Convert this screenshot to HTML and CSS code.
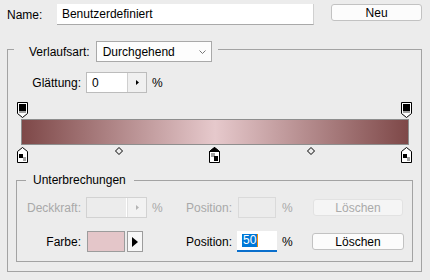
FILE: index.html
```html
<!DOCTYPE html>
<html lang="de">
<head>
  <meta charset="UTF-8">
  <title>Verlaufseditor</title>
  <link rel="stylesheet" href="styles.css">
</head>
<body>
  <div class="dialog">

    <!-- Name -->
    <div class="name-row">
      <span class="name-label">Name:</span>
      <div class="name-field">Benutzerdefiniert</div>
      <button class="btn btn-new">Neu</button>
    </div>

    <!-- Verlauf -->
    <fieldset class="group">
      <legend class="group-legend">
        <span>Verlaufsart:</span>
        <span class="select">Durchgehend
          <svg class="chevron" width="7" height="4" viewBox="0 0 7 4"><path d="M0.5 0.5L3.5 3.5L6.5 0.5" fill="none" stroke="#777"/></svg>
        </span>
      </legend>

      <div class="smooth-row">
        <span class="smooth-label">Glättung:</span>
        <div class="spin">
          <span class="spin-value">0</span>
          <span class="spin-btn"><svg width="3" height="5" viewBox="0 0 3 5"><path d="M0 0L3 2.5L0 5Z" fill="#000"/></svg></span>
        </div>
        <span class="unit">%</span>
      </div>

      <div class="editor">
        <div class="stop-track">
          <svg class="stop" style="left: 0%" width="11" height="16" viewBox="0 0 11 16">
            <path d="M0.5 0.5H10.5V11.5L5.5 15.5L0.5 11.5Z" fill="#fff" stroke="#000"/>
            <rect x="2" y="2" width="7" height="7" fill="#000"/>
            <rect x="2" y="9" width="7" height="2" fill="#a0a0a0"/>
          </svg>
          <svg class="stop" style="left: 100%" width="11" height="16" viewBox="0 0 11 16">
            <path d="M0.5 0.5H10.5V11.5L5.5 15.5L0.5 11.5Z" fill="#fff" stroke="#000"/>
            <rect x="2" y="2" width="7" height="7" fill="#000"/>
            <rect x="2" y="9" width="7" height="2" fill="#a0a0a0"/>
          </svg>
        </div>

        <div class="gradient-bar"></div>

        <div class="stop-track stop-track-bottom">
          <svg class="stop" style="left: 0%" width="11" height="16" viewBox="0 0 11 16">
            <path d="M5.5 0.5L10.5 4.5V15.5H0.5V4.5Z" fill="#fff" stroke="#000"/>
            <rect x="2" y="7" width="4" height="4" fill="#000"/>
            <rect x="6" y="10" width="3" height="4" fill="#a0a0a0"/>
          </svg>
          <svg class="midpoint" style="left: 25%" width="8" height="8" viewBox="0 0 8 8"><path d="M4 0.5L7.5 4L4 7.5L0.5 4Z" fill="none" stroke="#000"/></svg>
          <svg class="stop" style="left: 50%" width="11" height="16" viewBox="0 0 11 16">
            <path d="M5.5 0.5L10.5 4.5V15.5H0.5V4.5Z" fill="#fff" stroke="#000"/>
            <path d="M5.5 0.5L10.5 4.5H0.5Z" fill="#000" stroke="#000"/>
            <rect x="2" y="6" width="4" height="4" fill="#a0a0a0"/>
            <rect x="5" y="9" width="4" height="5" fill="#000"/>
          </svg>
          <svg class="midpoint" style="left: 75%" width="8" height="8" viewBox="0 0 8 8"><path d="M4 0.5L7.5 4L4 7.5L0.5 4Z" fill="none" stroke="#000"/></svg>
          <svg class="stop" style="left: 100%" width="11" height="16" viewBox="0 0 11 16">
            <path d="M5.5 0.5L10.5 4.5V15.5H0.5V4.5Z" fill="#fff" stroke="#000"/>
            <rect x="2" y="7" width="4" height="4" fill="#000"/>
            <rect x="6" y="10" width="3" height="4" fill="#a0a0a0"/>
          </svg>
        </div>
      </div>

      <!-- Unterbrechungen -->
      <fieldset class="group group-inner">
        <legend class="inner-legend">Unterbrechungen</legend>

        <div class="stop-grid">
          <span class="field-label disabled">Deckkraft:</span>
          <div class="spin spin-disabled">
            <span class="spin-value"></span>
            <span class="spin-btn"><svg width="3" height="5" viewBox="0 0 3 5"><path d="M0 0L3 2.5L0 5Z" fill="#b4b4b4"/></svg></span>
          </div>
          <span class="unit disabled">%</span>
          <span class="pos-label disabled">Position:</span>
          <div class="pos-field pos-disabled"></div>
          <span class="unit disabled">%</span>
          <button class="btn btn-delete" disabled>Löschen</button>

          <span class="field-label">Farbe:</span>
          <div class="color-pick">
            <span class="swatch"></span>
            <span class="color-btn"><svg width="6" height="10" viewBox="0 0 6 10"><path d="M0 0L6 5L0 10Z" fill="#000"/></svg></span>
          </div>
          <span></span>
          <span class="pos-label">Position:</span>
          <div class="pos-field pos-active"><span class="selected">50</span><span class="caret"></span></div>
          <span class="unit">%</span>
          <button class="btn btn-delete btn-delete-on">Löschen</button>
        </div>
      </fieldset>
    </fieldset>
  </div>
</body>
</html>
```

FILE: styles.css
```css
body {
  margin: 0;
  background-color: #ececec;
  font-family: "Liberation Sans", Arial, sans-serif;
  font-size: 12px;
  line-height: 14px;
  color: #000;
}
.dialog {
  width: 430px;
  height: 280px;
  padding: 4px 8px 0 7px;
  box-sizing: border-box;
}

/* name row */
.name-row {
  display: flex;
  align-items: center;
  height: 21px;
}
.name-label {
  width: 50px;
}
.name-field {
  width: 258px;
  height: 21px;
  box-sizing: border-box;
  padding: 3px 5px;
  background-color: #fff;
  border-right: 1px solid #d0d0d0;
  border-bottom: 1px solid #a9a9a9;
}
.btn {
  font-family: inherit;
  font-size: 12px;
  color: #000;
  background-color: #fcfcfc;
  border: 1px solid #c2c2c2;
  border-radius: 3px;
  padding: 0;
}
.btn-new {
  width: 91px;
  height: 17px;
  margin-left: 17px;
  margin-top: -4px;
}

/* groups */
.group {
  margin: 12px 0 0 0;
  padding: 10px 8px 9px 8px;
  border: 1px solid #a3a3a3;
  min-width: 0;
}
.group-legend {
  display: flex;
  align-items: center;
  margin-left: -2px;
  padding: 4px 6px 0 15px;
}
.select {
  display: flex;
  align-items: center;
  justify-content: space-between;
  width: 116px;
  height: 21px;
  box-sizing: border-box;
  margin-left: 6px;
  padding: 0 5px 0 6px;
  background-color: #fdfdfd;
  border: 1px solid #a9a9a9;
}
.chevron {
  margin-top: 1px;
}

/* smoothing */
.smooth-row {
  display: flex;
  align-items: center;
  height: 21px;
}
.smooth-label {
  width: 65px;
  padding-right: 5px;
  text-align: right;
}
.spin {
  display: flex;
  width: 61px;
  height: 21px;
  box-sizing: border-box;
  border: 1px solid #bcbcbc;
}
.spin-value {
  width: 40px;
  padding: 3px 0 0 5px;
  box-sizing: border-box;
  background-color: #fff;
}
.spin-btn {
  flex: 1;
  display: flex;
  align-items: center;
  justify-content: center;
  background-color: #f0f0f0;
  border-left: 1px solid #cfcfcf;
}
.unit {
  padding-left: 5px;
}

/* gradient editor */
.editor {
  margin-top: 9px;
}
.stop-track {
  position: relative;
  height: 17px;
  margin: 0 6px 0 7px;
}
.stop-track-bottom {
  height: 18px;
}
.stop {
  position: absolute;
  top: 0;
  margin-left: -6px;
}
.stop-track-bottom .stop {
  top: 2px;
}
.midpoint {
  position: absolute;
  top: 2px;
  margin-left: -4px;
}
.gradient-bar {
  height: 26px;
  margin: 0 4px 0 5px;
  box-sizing: border-box;
  border: 1px solid #8e8e8e;
  background: linear-gradient(to right, #7e4848, #e6c9cc 50%, #7e4848);
}

/* stops group */
.group-inner {
  margin-top: 10px;
  padding: 10px 8px 9px 9px;
}
.inner-legend {
  padding: 0 8px 0 7px;
}
.stop-grid {
  display: grid;
  grid-template-columns: 60px 61px 39px 51px 40px 35px 92px;
  grid-template-rows: 21px 21px;
  row-gap: 13px;
  align-items: center;
}
.field-label {
  padding-right: 5px;
  text-align: right;
}
.disabled {
  color: #a9a9a9;
}
.spin-disabled {
  border-color: #d2d2d2;
}
.spin-disabled .spin-value {
  background-color: #ececec;
  border-right: 1px solid #fff;
}
.spin-disabled .spin-btn {
  background-color: #f2f2f2;
  border-left-color: #e2e2e2;
}
.pos-field {
  height: 21px;
  box-sizing: border-box;
}
.pos-disabled {
  width: 38px;
  margin-left: 1px;
  border: 1px solid #dadada;
}
.pos-active {
  display: flex;
  align-items: center;
  padding-left: 5px;
  background-color: #fff;
  border-bottom: 2px solid #0a6fcc;
}
.selected {
  background-color: #0078d7;
  color: #fff;
  padding: 0 1px;
  line-height: 13px;
}
.caret {
  width: 1px;
  height: 13px;
  background-color: #f08a00;
}
.color-pick {
  display: flex;
  gap: 2px;
  height: 21px;
  margin-left: 1px;
}
.swatch {
  width: 38px;
  box-sizing: border-box;
  background-color: #e4c6c9;
  border: 1px solid #9c9c9c;
}
.color-btn {
  display: flex;
  align-items: center;
  justify-content: center;
  width: 16px;
  box-sizing: border-box;
  background-color: #f7f7f7;
  border: 1px solid #9c9c9c;
}
.btn-delete {
  width: 90px;
  height: 17px;
  margin-left: 1px;
}
.btn-delete:disabled {
  color: #aaa;
  background-color: #f5f5f5;
  border-color: #e2e2e2;
}
.btn-delete-on {
  width: 92px;
  margin-left: 0;
}
```
